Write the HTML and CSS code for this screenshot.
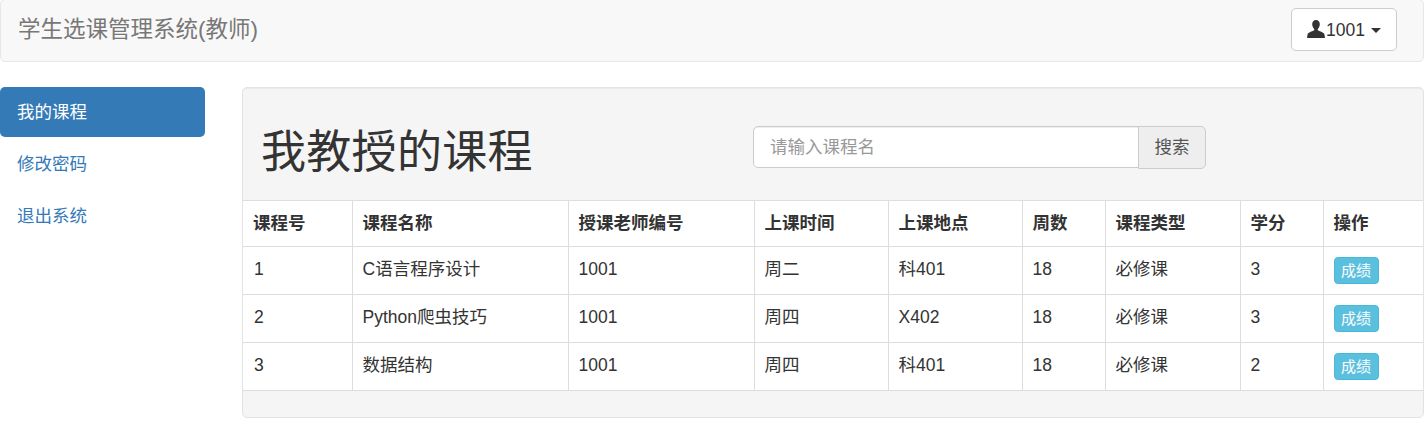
FILE: index.html
```html
<!DOCTYPE html>
<html lang="zh">
<head>
<meta charset="utf-8">
<title>学生选课管理系统</title>
<link rel="stylesheet" href="styles.css">
</head>
<body>
<nav class="navbar">
  <span class="brand">学生选课管理系统(教师)</span>
  <button class="user-btn"><svg class="user-icon" viewBox="0 0 18 18"><path d="M9 0C6.600 0 5.200 1.900 5.200 4.300c0 1.800.8 3.500 1.900 4.600.3.500.3 1.100-.3 1.500C5 11.400 1.300 12.200.6 14.200L0 18h18l-.6-3.800c-.7-2-4.400-2.800-6.200-3.800-.6-.4-.6-1-.3-1.500 1.100-1.100 1.900-2.800 1.900-4.600C12.800 1.900 11.400 0 9 0z"/></svg>1001<span class="caret"></span></button>
</nav>
<div class="layout">
  <ul class="side">
    <li class="side-item active">我的课程</li>
    <li class="side-item">修改密码</li>
    <li class="side-item">退出系统</li>
  </ul>
  <section class="panel">
    <div class="head">
      <h1 class="title">我教授的课程</h1>
      <div class="search"><input class="search-input" placeholder="请输入课程名"><button class="search-btn">搜索</button></div>
    </div>
    <table class="grid">
      <colgroup><col class="c1"><col class="c2"><col class="c3"><col class="c4"><col class="c5"><col class="c6"><col class="c7"><col class="c8"><col class="c9"></colgroup>
      <thead><tr><th>课程号</th><th>课程名称</th><th>授课老师编号</th><th>上课时间</th><th>上课地点</th><th>周数</th><th>课程类型</th><th>学分</th><th>操作</th></tr></thead>
      <tbody>
        <tr><td>1</td><td>C语言程序设计</td><td>1001</td><td>周二</td><td>科401</td><td>18</td><td>必修课</td><td>3</td><td><span class="tag">成绩</span></td></tr>
        <tr><td>2</td><td>Python爬虫技巧</td><td>1001</td><td>周四</td><td>X402</td><td>18</td><td>必修课</td><td>3</td><td><span class="tag">成绩</span></td></tr>
        <tr><td>3</td><td>数据结构</td><td>1001</td><td>周四</td><td>科401</td><td>18</td><td>必修课</td><td>2</td><td><span class="tag">成绩</span></td></tr>
      </tbody>
    </table>
    <div class="foot"></div>
  </section>
</div>
</body>
</html>
```
FILE: styles.css
```css
* { box-sizing: border-box; }
html, body { margin: 0; padding: 0; }
body { width: 1424px; font-family: "Liberation Sans", "Noto Sans CJK SC", sans-serif; font-size: 17.5px; line-height: 25px; color: #333; background: #fff; overflow: hidden; }
.navbar { height: 63px; margin-top: -1px; padding: 0 26px 2px 17px; display: flex; align-items: center; justify-content: space-between; background: #f8f8f8; border: 1px solid #e7e7e7; border-radius: 5px; }
.brand { font-size: 22.5px; color: #777; }
.user-btn { height: 43px; width: 106px; padding: 1px 0 0; display: flex; align-items: center; justify-content: center; font: inherit; color: #333; background: #fff; border: 1px solid #ccc; border-radius: 5px; }
.user-icon { width: 18px; height: 18px; margin: -3px 1px 0 0; fill: #333; }
.caret { margin-left: 6px; border-top: 5px solid #333; border-left: 5px solid transparent; border-right: 5px solid transparent; }
.layout { display: flex; margin-top: 25px; }
.side { width: 205px; flex: none; margin: 0 37px 0 0; padding: 0; list-style: none; display: flex; flex-direction: column; gap: 2px; }
.side-item { height: 50px; padding-left: 17px; display: flex; align-items: center; color: #337ab7; border-radius: 5px; }
.side-item.active { color: #fff; background: #337ab7; }
.panel { width: 1182px; height: 331px; background: #f5f5f5; border: 1px solid #e3e3e3; border-radius: 5px; box-shadow: inset 0 1px 1px rgba(0,0,0,.05); }
.head { height: 112px; display: flex; align-items: center; padding: 7px 0 0 18px; }
.title { width: 492px; margin: 0; padding-top: 10px; font-size: 45px; line-height: 50px; font-weight: 400; letter-spacing: .3px; }
.search { display: flex; align-items: flex-start; }
.search-input { width: 386px; height: 42px; padding: 0 16px; font: inherit; border: 1px solid #ccc; border-radius: 5px 0 0 5px; background: #fff; box-shadow: inset 0 1px 1px rgba(0,0,0,.075); }
.search-input::placeholder { color: #999; }
.search-btn { width: 68px; height: 43px; margin-left: -1px; padding: 0; font: inherit; color: #555; background: #eee; border: 1px solid #ccc; border-radius: 0 5px 5px 0; }
.grid { width: 100%; table-layout: fixed; border-collapse: collapse; background: #fff; }
.grid th, .grid td { padding: 10px 10px 8px; border: 1px solid #ddd; text-align: left; vertical-align: top; overflow: hidden; }
.grid th:first-child, .grid td:first-child { border-left: 0; padding-left: 11px; }
.grid th:first-child { padding-left: 10px; }
.grid th:last-child, .grid td:last-child { border-right: 0; }
.grid th { height: 46px; font-weight: 700; }
.grid td { height: 48px; }
.c1 { width: 109px; } .c2 { width: 216px; } .c3 { width: 186px; } .c4 { width: 134px; } .c5 { width: 134px; } .c6 { width: 83px; } .c7 { width: 135px; } .c8 { width: 83px; }
.tag { display: inline-block; padding: 2px 6.5px; font-size: 15px; line-height: 21px; color: #fff; background: #5bc0de; border: 1px solid #46b8da; border-radius: 4px; vertical-align: top; }
.foot { height: 27px; }
```
